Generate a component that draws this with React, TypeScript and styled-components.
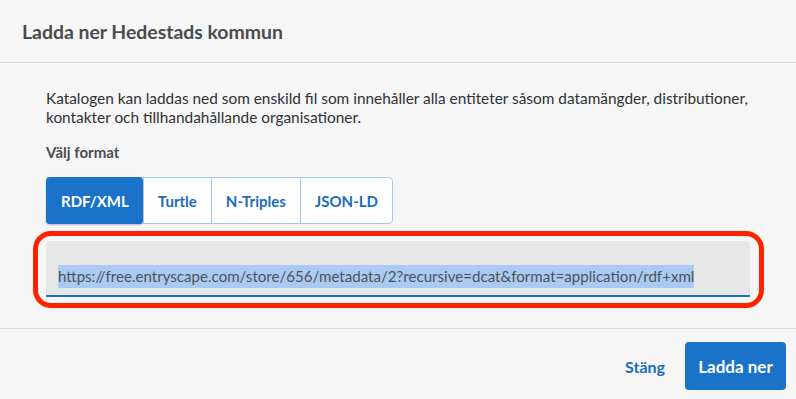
import { useState } from 'react';
import styled, { createGlobalStyle } from 'styled-components';

const GlobalStyle = createGlobalStyle`
  html, body {
    margin: 0;
    padding: 0;
    background: #f5f6f5;
  }
  body {
    font-family: Lato, "Liberation Sans", sans-serif;
    color: #333;
  }
`;

const FORMATS = ['RDF/XML', 'Turtle', 'N-Triples', 'JSON-LD'];

const URL =
  'https://free.entryscape.com/store/656/metadata/2?recursive=dcat&format=application/rdf+xml';

export default function App() {
  const [format, setFormat] = useState('RDF/XML');

  return (
    <>
      <GlobalStyle />
      <Modal>
        <Header>
          <Title>Ladda ner Hedestads kommun</Title>
        </Header>

        <Body>
          <Intro>
            Katalogen kan laddas ned som enskild fil som innehåller alla entiteter
            såsom datamängder, distributioner, kontakter och tillhandahållande
            organisationer.
          </Intro>

          <Label>Välj format</Label>

          <ButtonGroup>
            {FORMATS.map((f) => (
              <FormatButton
                key={f}
                $active={f === format}
                onClick={() => setFormat(f)}
              >
                {f}
              </FormatButton>
            ))}
          </ButtonGroup>

          <Highlight>
            <UrlField>
              <Selected>{URL}</Selected>
            </UrlField>
          </Highlight>
        </Body>

        <Footer>
          <TextButton>Stäng</TextButton>
          <PrimaryButton>Ladda ner</PrimaryButton>
        </Footer>
      </Modal>
    </>
  );
}

const Modal = styled.div`
  width: 796px;
  height: 399px;
  display: flex;
  flex-direction: column;
  background: #f5f6f5;
  overflow: hidden;
`;

const Header = styled.div`
  height: 63px;
  display: flex;
  align-items: center;
  padding: 0 22px;
  border-bottom: 1px solid #d9dbdb;
  box-sizing: border-box;
  flex: none;
`;

const Title = styled.h2`
  margin: 0;
  padding-top: 1px;
  font-size: 19.4px;
  font-weight: 700;
  color: #484c51;
`;

const Body = styled.div`
  padding: 26px 46px 20px;
  border-bottom: 1px solid #d9dbdb;
  flex: none;
`;

const Intro = styled.p`
  margin: 0;
  font-size: 15.4px;
  line-height: 18.5px;
  color: #2f3337;
`;

const Label = styled.div`
  margin-top: 17px;
  font-size: 15px;
  line-height: 18px;
  font-weight: 700;
  color: #4a4e52;
`;

const ButtonGroup = styled.div`
  display: inline-flex;
  margin-top: 16px;
  height: 47px;
  border: 1px solid #a9c7e6;
  border-radius: 4px;
  background: #fff;
  box-sizing: border-box;
`;

const FormatButton = styled.button<{ $active?: boolean }>`
  font-family: inherit;
  font-size: 15px;
  font-weight: 700;
  padding: 0 14px;
  margin: -1px 0;
  border: none;
  border-left: 1px solid #a9c7e6;
  background: ${(p) => (p.$active ? '#1a73c8' : 'transparent')};
  color: ${(p) => (p.$active ? '#fff' : '#1a6dbd')};
  border-radius: ${(p) => (p.$active ? '4px' : '0')};
  box-shadow: ${(p) => (p.$active ? '0 1px 2px rgba(0,0,0,0.25)' : 'none')};
  cursor: pointer;

  &:first-child {
    border-left: none;
    margin-left: -1px;
    padding: 0 14px 0 15px;
  }
`;

const Highlight = styled.div`
  margin: 7px -14px 0 -13px;
  padding: 5px 9px 6px 8px;
  border: 5px solid #ff2200;
  border-radius: 18px;
`;

const UrlField = styled.div`
  height: 56px;
  display: flex;
  align-items: flex-end;
  padding: 0 12px 7px;
  box-sizing: border-box;
  background: #e7e7e7;
  border-bottom: 2px solid #1a73c8;
  border-radius: 4px 4px 0 0;
  font-size: 15.1px;
  color: #4e5256;
  white-space: nowrap;
  overflow: hidden;
`;

const Selected = styled.span`
  display: inline-block;
  line-height: 23px;
  background: #a9cbf3;
`;

const Footer = styled.div`
  flex: 1;
  display: flex;
  justify-content: flex-end;
  align-items: flex-start;
  gap: 20px;
  padding: 13px 10px 0;
`;

const TextButton = styled.button`
  font-family: inherit;
  font-size: 16px;
  font-weight: 700;
  height: 48px;
  padding: 0;
  border: none;
  background: none;
  color: #1a6dbd;
  cursor: pointer;
`;

const PrimaryButton = styled.button`
  font-family: inherit;
  font-size: 17px;
  font-weight: 700;
  height: 48px;
  width: 101px;
  border: none;
  border-radius: 4px;
  background: #1a73c8;
  color: #fff;
  cursor: pointer;
`;
